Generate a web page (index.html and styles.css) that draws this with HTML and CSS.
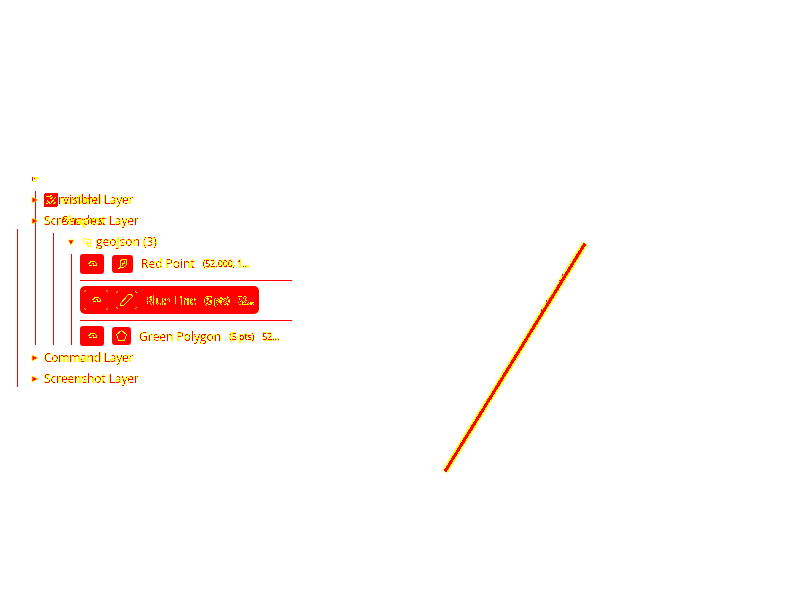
FILE: index.html
```html
<!DOCTYPE html>
<html lang="en">
<head>
<meta charset="utf-8">
<title>Layers</title>
<link rel="stylesheet" href="styles.css">
</head>
<body>
<svg class="defs" width="0" height="0" aria-hidden="true">
  <filter id="edge" x="0" y="0" width="1" height="1" color-interpolation-filters="sRGB">
    <feColorMatrix values="0 0 0 0 1  0 0 0 1 0  0 0 0 0 0  0 0 0 1 0"/>
    <feComponentTransfer>
      <feFuncG type="discrete" tableValues="1 1 1 1 1 1 1 0 0 0"/>
      <feFuncA type="discrete" tableValues="0 1 1 1 1 1 1 1 1 1 1 1 1 1 1 1 1 1 1 1"/>
    </feComponentTransfer>
  </filter>
</svg>
<main class="page">
  <section class="tree">
    <i class="guide g1"></i><i class="guide g2"></i><i class="guide g3"></i><i class="guide g4"></i>
    <div class="row first"><svg class="arrow small" viewBox="0 0 8 8" shape-rendering="crispEdges"><path d="M1.500 2.500h5M4.500 3.500h2M1.500 6.500h3M3.500 4.500h2" class="hook"/><path d="M1 2h1v4H1zM3 3h1v1H3z" class="dot"/></svg></div>
    <div class="row"><svg class="arrow" viewBox="0 0 8 8"><path d="M1 1 7 4 1 7z" class="mark"/></svg><span class="label tight">Command Layer</span>
      <span class="over"><svg class="check" viewBox="0 0 14 14" shape-rendering="crispEdges"><rect width="14" height="14" rx="2"/><path d="m3 7 3 4 6-7M2 3l3 1 3-2M9 11l3-2M2 11l2-1M6 6l3-2"/></svg><span class="label">visible</span></span></div>
    <div class="row"><svg class="arrow" viewBox="0 0 8 8"><path d="M1 1 7 4 1 7z" class="mark"/></svg><span class="label snug">Screenshot Layer</span>
      <span class="over second"><span class="label">Shapes</span></span></div>
    <div class="row nested"><svg class="arrow" viewBox="0 0 8 8"><path d="M1 2h6L4 7z" class="mark"/></svg><svg class="folder" viewBox="0 0 10 12" shape-rendering="crispEdges"><path d="M1.500 4.500v-2h2l1 1h4v7h-2l-1-2-2-1-2-2M5.500 4.500v3h2"/></svg><span class="label">geojson (3)</span></div>
    <ul class="features">
      <li class="item"><span class="btn"><svg viewBox="0 0 24 20" shape-rendering="crispEdges"><path d="M8.500 10.500l1-2 2-1h3l2 2v2h-3v-2h-2M8.500 11.500h3"/></svg></span><span class="btn kind"><svg viewBox="0 0 21 18" shape-rendering="crispEdges"><path d="M8.500 5.500l2-1h4v5l-3 3h-3v-3zM8.500 12.500l-2 1M12.500 6v2l-2 1v2"/></svg></span><span class="label name">Red Point</span><span class="label meta">(52.000, 1...</span></li>
      <li class="item selected"><span class="btn corners"><svg viewBox="0 0 24 20" shape-rendering="crispEdges"><path d="M8.500 10.500l1-2 2-1h3l2 2v2h-3v-2h-2M8.500 11.500h3"/></svg></span><span class="btn kind corners"><svg viewBox="0 0 21 18" shape-rendering="crispEdges"><path d="M4.500 12.500l8-9h3l1 2-9 9h-3z"/></svg></span><span class="label name">Blue Line</span><span class="label meta">(5 pts)</span><span class="label meta">52...</span></li>
      <li class="item third"><span class="btn"><svg viewBox="0 0 24 20" shape-rendering="crispEdges"><path d="M8.500 10.500l1-2 2-1h3l2 2v2h-3v-2h-2M8.500 11.500h3"/></svg></span><span class="btn kind poly"><svg viewBox="0 0 19 18" shape-rendering="crispEdges"><path d="m9.500 3.500 5 4-2 6h-6l-2-6z"/></svg></span><span class="label name">Green Polygon</span><span class="label meta">(5 pts)</span><span class="label meta">52...</span></li>
    </ul>
    <div class="row"><svg class="arrow" viewBox="0 0 8 8"><path d="M1 1 7 4 1 7z" class="mark"/></svg><span class="label tight">Command Layer</span></div>
    <div class="row"><svg class="arrow" viewBox="0 0 8 8"><path d="M1 1 7 4 1 7z" class="mark"/></svg><span class="label snug">Screenshot Layer</span></div>
  </section>
  <svg class="map" viewBox="0 0 160 250" shape-rendering="crispEdges"><path class="halo" d="M15 241.500 155 13.500"/><path class="core" d="M15 241.500 155 13.500"/><path class="core thin" d="M132 44v2M129 50h2M116 70v2M111 79v2"/></svg>
</main>
</body>
</html>
```
FILE: styles.css
```css
* { box-sizing: border-box; }
body { margin: 0; background: #fff; font: 12px/21px "Open Sans", "Noto Sans", sans-serif; overflow: hidden; }
.defs { position: absolute; }
.page { display: flex; width: 800px; height: 600px; }
.tree { position: relative; width: 430px; padding: 168px 0 0 31px; }
.guide { position: absolute; width: 1px; background: #f00; }
.g1 { left: 17px; top: 229px; height: 158px; }
.g2 { left: 35px; top: 191px; height: 154px; }
.g3 { left: 53px; top: 233px; height: 112px; }
.g4 { left: 71px; top: 254px; height: 91px; }
.row { position: relative; display: flex; align-items: center; height: 21px; }
.row .label { margin-top: -1px; }
.arrow { width: 8px; height: 8px; margin-right: 5px; margin-top: 1px; }
.mark { fill: #f00; stroke: #ff0; stroke-width: .8; }
.hook { fill: none; stroke: #ff0; }
.dot { fill: #f00; }
.label { color: #000; filter: url(#edge); white-space: pre; }
.tight { letter-spacing: -.22px; }
.snug { letter-spacing: -.1px; }
.over { position: absolute; left: 13px; top: 1px; display: flex; align-items: center; gap: 5px; }
.over.second { left: 31px; }
.check { width: 14px; height: 14px; fill: #f00; stroke: #ff0; margin-top: -1px; }
.check rect { stroke: none; }
.check path { fill: none; }
.nested { padding-left: 36px; }
.nested .arrow { margin-right: 7px; }
.folder { width: 10px; height: 12px; margin-right: 4px; fill: none; stroke: #ff0; }
.features { list-style: none; margin: 0 0 0 49px; padding: 1px 0 0; width: 212px; }
.item { display: flex; align-items: center; height: 28px; padding-bottom: 6px; border-bottom: 1px solid #f00; }
.item.selected { width: 179px; height: 28px; margin: 5px 0 6px; background: #f00; border: 0; border-radius: 5px; padding: 0 0 0 4px; position: relative; }
.item.selected::after { content: ""; position: absolute; left: 0; top: 34px; width: 212px; height: 1px; background: #f00; }
.item.third { border: 0; height: 31px; margin-bottom: -4px; padding: 1px 0 0; }
.btn { display: flex; flex: none; width: 24px; height: 20px; background: #f00; border-radius: 3px; margin-right: 8px; }
.btn svg { width: 100%; height: 100%; fill: none; stroke: #ff0; }
.btn.kind { width: 21px; height: 18px; }
.btn.poly { width: 19px; }
.corners {
  --c: linear-gradient(#ff0, #ff0);
  background: var(--c) 0 1px / 1px 1px, var(--c) 1px 0 / 1px 1px,
    var(--c) calc(100% - 1px) 0 / 1px 1px, var(--c) 100% 1px / 1px 1px,
    var(--c) 0 calc(100% - 1px) / 1px 1px, var(--c) 1px 100% / 1px 1px,
    var(--c) calc(100% - 1px) 100% / 1px 1px, var(--c) 100% calc(100% - 1px) / 1px 1px;
  background-repeat: no-repeat;
  border-radius: 0;
}
.meta { font-size: 9px; letter-spacing: -.1px; margin-left: 8px; -webkit-text-stroke: .3px #000; }
.map { width: 160px; height: 250px; margin-top: 230px; fill: none; }
.halo { stroke: #ff0; stroke-width: 6; }
.core { stroke: #f00; stroke-width: 3; }
.thin { stroke-width: 1; }
```
